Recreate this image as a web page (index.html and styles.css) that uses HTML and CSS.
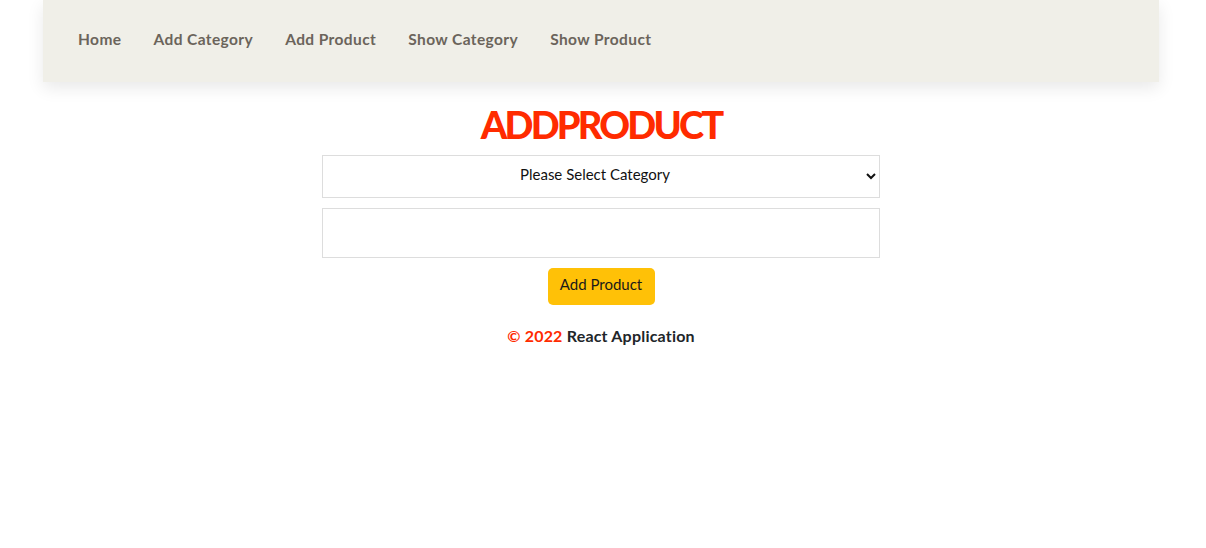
FILE: index.html
```html
<!DOCTYPE html>
<html lang="en">
<head>
<meta charset="utf-8">
<title>Add Product</title>
<link rel="stylesheet" href="styles.css">
</head>
<body>
<nav class="navbar">
  <a class="nav-link" href="#">Home</a>
  <a class="nav-link" href="#">Add Category</a>
  <a class="nav-link" href="#">Add Product</a>
  <a class="nav-link" href="#">Show Category</a>
  <a class="nav-link" href="#">Show Product</a>
</nav>
<main class="page">
  <h1 class="title">ADDPRODUCT</h1>
  <form class="form">
    <select class="field select">
      <option>Please Select Category</option>
    </select>
    <input class="field input" type="text">
    <button class="btn" type="button">Add Product</button>
  </form>
  <footer class="footer"><span class="copy">© 2022</span> React Application</footer>
</main>
</body>
</html>
```

FILE: styles.css
```css
html, body {
  margin: 0;
  padding: 0;
  background: #ffffff;
  font-family: "Lato", "Open Sans", sans-serif;
}

.navbar {
  width: 1116px;
  height: 82px;
  margin: 0 47px 0 43px;
  box-sizing: border-box;
  padding: 0 0 0 19px;
  display: flex;
  align-items: center;
  background: #f0efe8;
  box-shadow: 0 6px 16px rgba(0, 0, 0, 0.09);
}

.nav-link {
  padding: 0 16px 5px;
  font-size: 15.5px;
  font-weight: 700;
  letter-spacing: 0.4px;
  color: #6b645b;
  text-decoration: none;
}

.page {
  display: flex;
  flex-direction: column;
  align-items: center;
  margin-right: 4px;
}

.title {
  margin: 21px 0 0;
  font-size: 38px;
  line-height: 43px;
  font-weight: 900;
  color: #ff2b00;
  letter-spacing: -2.8px;
}

.form {
  width: 558px;
  margin-top: 9px;
  display: flex;
  flex-direction: column;
  align-items: center;
}

.field {
  width: 100%;
  box-sizing: border-box;
  border: 1px solid #dddddd;
  border-radius: 0;
  background: #ffffff;
  font-family: inherit;
  font-size: 15px;
  color: #111111;
}

.select {
  height: 43px;
  text-align: center;
  text-align-last: center;
  padding: 0 2px 5px;
}

.input {
  height: 50px;
  margin-top: 10px;
  padding: 0 10px;
}

.btn {
  margin-top: 10px;
  width: 107px;
  height: 37px;
  border: none;
  border-radius: 5px;
  background: #ffc107;
  color: #1a1a1a;
  font-family: inherit;
  font-size: 15px;
  padding: 0 0 5px;
}

.footer {
  margin-top: 21px;
  font-size: 16px;
  font-weight: 700;
  letter-spacing: 0.2px;
  color: #212529;
}

.copy {
  color: #ff2b00;
}
```
